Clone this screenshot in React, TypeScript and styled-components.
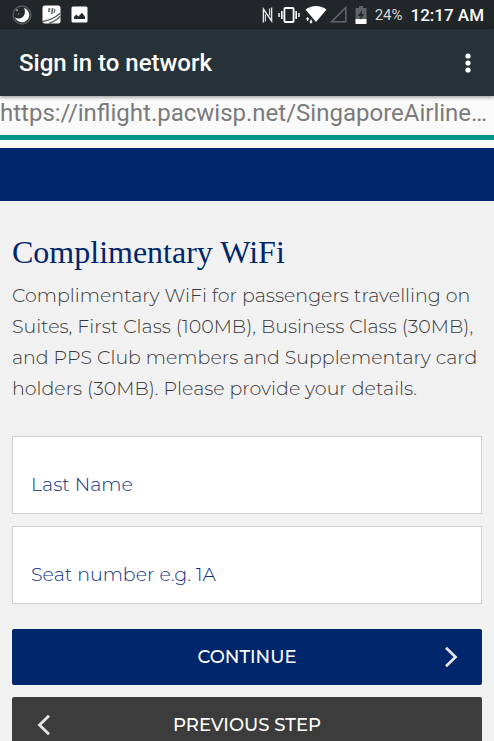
import React from "react";
import styled, { createGlobalStyle } from "styled-components";

const GlobalStyle = createGlobalStyle`
  *, *::before, *::after { box-sizing: border-box; }
  body { margin: 0; background: #f1f1f1; }
  button, input { font: inherit; }
`;

const Screen = styled.div`
  display: flex;
  flex-direction: column;
  height: 100vh;
  overflow: hidden;
  font-family: Roboto, "Liberation Sans", sans-serif;
`;

const StatusBar = styled.div`
  display: flex;
  flex: none;
  align-items: center;
  justify-content: space-between;
  height: 29px;
  padding: 0 10px 0 12px;
  background: #212629;
  color: #fff;
`;

const StatusGroup = styled.div<{ $gap: number }>`
  display: flex;
  align-items: center;
  gap: ${(p) => p.$gap}px;

  svg { display: block; flex: none; }
`;

const Battery = styled.span`
  font-size: 15px;
  line-height: 20px;
  color: #d5d6d7;
`;

const Clock = styled.time`
  font-size: 17px;
  font-weight: 500;
  line-height: 20px;
`;

const AppBar = styled.header`
  z-index: 1;
  display: flex;
  flex: none;
  align-items: center;
  justify-content: space-between;
  height: 67px;
  padding: 0 14px 0 19px;
  background: #273238;
  box-shadow: 0 1px 4px rgba(0, 0, 0, 0.45);
  color: #fff;
`;

const AppTitle = styled.h1`
  margin: 0;
  font-size: 24px;
  font-weight: 500;
  line-height: 32px;
`;

const MenuButton = styled.button`
  display: flex;
  padding: 8px;
  border: 0;
  background: none;
  color: inherit;
`;

const Address = styled.div`
  flex: none;
  height: 44px;
  overflow: hidden;
  border-bottom: 5px solid #009688;
  background: #fafafa;
  color: #7b7b7b;
  font-size: 24px;
  line-height: 35px;
  white-space: nowrap;
  text-overflow: ellipsis;
`;

const Portal = styled.main`
  flex: 1;
  min-height: 0;
  overflow: hidden auto;
  scrollbar-width: none;
  border-top: 8px solid #fafafa;
  background: #f1f1f1;
  font-family: Montserrat, Inter, "Open Sans", sans-serif;
`;

const BrandBand = styled.div`
  height: 53px;
  background: #00266b;
`;

const Content = styled.section`
  padding: 27px 12px 12px;
`;

const Heading = styled.h2`
  margin: 0;
  color: #00266b;
  font-family: "Liberation Serif", serif;
  font-size: 32px;
  font-weight: 400;
  line-height: 48px;
`;

const Intro = styled.p`
  margin: 4px 0 32px;
  color: #383838;
  font-size: 19px;
  font-weight: 300;
  line-height: 31px;
`;

const Form = styled.form`
  display: flex;
  flex-direction: column;
  gap: 12px;
`;

const Field = styled.input`
  display: block;
  width: 100%;
  height: 78px;
  padding: 18px 18px 0;
  border: 1px solid #d0d0d0;
  border-radius: 0;
  outline: 0;
  background: #fff;
  color: #0a3085;
  font-size: 19px;
  font-weight: 300;

  &::placeholder { color: #0a3085; opacity: 1; }
`;

const Actions = styled.div`
  display: flex;
  flex-direction: column;
  gap: 12px;
  margin-top: 13px;
`;

const ActionButton = styled.button<{ $tone: "primary" | "secondary" }>`
  display: grid;
  grid-template-columns: 24px 1fr 24px;
  align-items: center;
  width: 100%;
  height: 56px;
  padding: 0 20px;
  border: 0;
  border-radius: 2px;
  background: ${(p) => (p.$tone === "primary" ? "#00266b" : "#3c3c3c")};
  color: #fff;
  font-size: 18px;
  font-weight: 500;
  text-align: center;
`;

const ActionLabel = styled.span`
  grid-column: 2;
`;

const Chevron = ({ back = false }: { back?: boolean }) => (
  <svg width="24" height="24" viewBox="0 0 24 24" fill="none" stroke="#e4e4e4" strokeWidth="2.8" aria-hidden="true">
    <path d={back ? "M17 2.8 7.5 12l9.5 9.2" : "M8 2.8 17.5 12 8 21.2"} />
  </svg>
);

const MoonIcon = () => (
  <svg width="20" height="20" viewBox="0 0 20 20" aria-hidden="true">
    <circle cx="10" cy="10" r="9" fill="#24292c" stroke="#555b5f" strokeWidth="1.4" />
    <path d="M12 3A7.3 7.3 0 1 1 3 12.2C5 14 9 14 11.2 11.4 13.2 9 13.4 5.7 12 3z" fill="#fff" />
    <path d="M4 5.2h2M5 4.2v2M6 9h1.2" stroke="#aaa" strokeWidth="1" />
  </svg>
);

const BlackBerryIcon = () => (
  <svg width="19" height="19" viewBox="0 0 19 19" aria-hidden="true">
    <rect x="0.5" y="0.5" width="18" height="18" rx="2.5" fill="#fff" />
    <path d="M6.4 4h1.8M9.6 4h1.8M6 6h1.8M9.2 6H11M12 5h1.4M8.8 8h1.8M11.6 7h1.4" stroke="#3b4145" strokeWidth="1.3" />
    <path d="M0.5 16.5C8 15.5 14 12 18.5 8M7 18.5C12 16.5 16 14 18.5 11" fill="none" stroke="#5b6165" strokeWidth="1.4" />
  </svg>
);

const PictureIcon = () => (
  <svg width="17" height="17" viewBox="0 0 17 17" aria-hidden="true">
    <rect x="0.5" y="0.5" width="16" height="16" rx="1.5" fill="#fff" />
    <path d="M3 13V11l2.4-2.6 2 2.1L11 6.8l3 4V13z" fill="#22282b" />
  </svg>
);

const NfcIcon = () => (
  <svg width="11" height="18" viewBox="0 0 11 18" fill="none" stroke="#e9e9e9" aria-hidden="true">
    <path d="M1.4 16.5V3L9.6 15V1.5" strokeWidth="1.4" />
    <path d="M3.4 15.5V8.5M7.6 9.5V2.5" strokeWidth="1" />
  </svg>
);

const VibrateIcon = () => (
  <svg width="22" height="18" viewBox="0 0 22 18" fill="none" stroke="#fff" aria-hidden="true">
    <rect x="6.4" y="2" width="9.2" height="14" rx="1" strokeWidth="1.8" />
    <path d="M3.8 5v8M18.2 5v8" strokeWidth="1.6" />
    <path d="M1 7v4M21 7v4" strokeWidth="1.4" />
  </svg>
);

const WifiIcon = () => (
  <svg width="22" height="19" viewBox="0 0 22 19" fill="#fff" aria-hidden="true">
    <path d="M0.5 4.5C6.5-.2 15.5-.2 21.5 4.5L11 17z" />
    <path d="M2.6 12.4v3.4M6 14.6v3.6" stroke="#212629" strokeWidth="4" />
    <path d="M2.6 12 4.4 14.2H3.3V16H1.9v-1.8H.8zM6 18.8 4.2 16.6h1.1v-1.8h1.4v1.8h1.1z" />
  </svg>
);

const SignalIcon = () => (
  <svg width="17" height="17" viewBox="0 0 17 17" fill="none" stroke="#62676a" strokeWidth="1.5" aria-hidden="true">
    <path d="M15.8 1.4v14.4H1.6z" />
  </svg>
);

const BatteryIcon = () => (
  <svg width="12" height="18" viewBox="0 0 12 18" aria-hidden="true">
    <path d="M4 0h4v2h2.5q1 0 1 1v14q0 1-1 1h-9q-1 0-1-1V3q0-1 1-1H4z" fill="#5f6466" />
    <path d="M.5 13h11v4q0 1-1 1h-9q-1 0-1-1z" fill="#fff" />
    <path d="M7 4 2.8 10h2.7v4L9.2 8H6.6z" fill="#212629" />
  </svg>
);

const MoreIcon = () => (
  <svg width="8" height="22" viewBox="0 0 8 22" fill="currentColor" aria-hidden="true">
    <circle cx="4" cy="4" r="2.6" />
    <circle cx="4" cy="11" r="2.6" />
    <circle cx="4" cy="18" r="2.6" />
  </svg>
);

export default function App() {
  return (
    <Screen>
      <GlobalStyle />
      <StatusBar>
        <StatusGroup $gap={10}>
          <MoonIcon />
          <BlackBerryIcon />
          <PictureIcon />
        </StatusGroup>
        <StatusGroup $gap={8}>
          <StatusGroup $gap={5}>
            <NfcIcon />
            <VibrateIcon />
            <StatusGroup $gap={3}>
              <WifiIcon />
              <SignalIcon />
            </StatusGroup>
          </StatusGroup>
          <BatteryIcon />
          <Battery>24%</Battery>
          <Clock>12:17 AM</Clock>
        </StatusGroup>
      </StatusBar>
      <AppBar>
        <AppTitle>Sign in to network</AppTitle>
        <MenuButton type="button" aria-label="More options">
          <MoreIcon />
        </MenuButton>
      </AppBar>
      <Address>https://inflight.pacwisp.net/SingaporeAirline…</Address>
      <Portal>
        <BrandBand />
        <Content>
          <Heading>Complimentary WiFi</Heading>
          <Intro>
            Complimentary WiFi for passengers travelling on Suites, First Class (100MB), Business Class (30MB), and PPS
            Club members and Supplementary card holders (30MB). Please provide your details.
          </Intro>
          <Form onSubmit={(event) => event.preventDefault()}>
            <Field type="text" name="lastName" aria-label="Last Name" placeholder="Last Name" />
            <Field type="text" name="seat" aria-label="Seat number e.g. 1A" placeholder="Seat number e.g. 1A" />
            <Actions>
              <ActionButton type="submit" $tone="primary">
                <ActionLabel>CONTINUE</ActionLabel>
                <Chevron />
              </ActionButton>
              <ActionButton type="button" $tone="secondary">
                <Chevron back />
                <ActionLabel>PREVIOUS STEP</ActionLabel>
              </ActionButton>
            </Actions>
          </Form>
        </Content>
      </Portal>
    </Screen>
  );
}
